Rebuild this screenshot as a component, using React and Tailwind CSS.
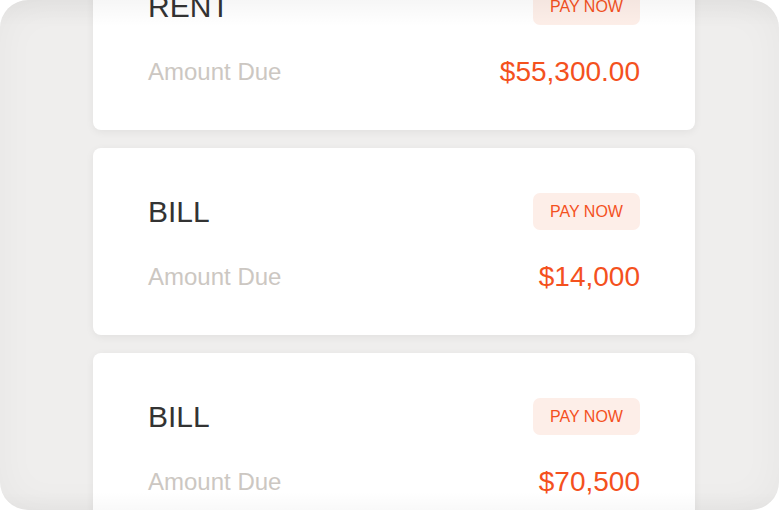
import React from "react";

const bills = [
  { title: "RENT", amount: "$55,300.00" },
  { title: "BILL", amount: "$14,000" },
  { title: "BILL", amount: "$70,500" },
];

const BillCard = ({ title, amount }) => (
  <div className="w-[602px] shrink-0 rounded-[8px] bg-white px-[55px] pt-[45px] pb-[41px] shadow-[0_2px_8px_rgba(0,0,0,0.06)]">
    <div className="flex h-[37px] items-center justify-between">
      <span className="text-[30px] leading-none text-[#333333]">{title}</span>
      <button className="flex h-[37px] w-[107px] items-center justify-center rounded-[7px] bg-[#fdeee8] text-[16px] text-[#f4511e]">
        PAY NOW
      </button>
    </div>
    <div className="mt-[30px] flex h-[34px] items-center justify-between">
      <span className="text-[24px] text-[#ccc7c2]">Amount Due</span>
      <span className="text-[28px] text-[#f4511e]">{amount}</span>
    </div>
  </div>
);

const App = () => {
  return (
    <div className="h-[510px] w-[779px] bg-white" style={{ fontFamily: "'Liberation Sans', Arial, sans-serif" }}>
      <div className="relative h-full w-full overflow-hidden rounded-[28px] bg-[#efeeed] shadow-[inset_0_0_40px_rgba(0,0,0,0.04)]">
        <div className="mt-[-57px] flex flex-col gap-[18px] pl-[93px]">
          {bills.map((b, i) => (
            <BillCard key={i} title={b.title} amount={b.amount} />
          ))}
        </div>
        <div className="pointer-events-none absolute inset-x-0 top-0 h-[26px] bg-gradient-to-b from-black/[0.035] to-transparent" />
        <div className="pointer-events-none absolute inset-x-0 bottom-0 h-[18px] bg-gradient-to-t from-black/[0.025] to-transparent" />
      </div>
    </div>
  );
};

export default App;
